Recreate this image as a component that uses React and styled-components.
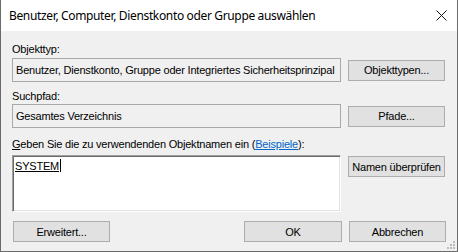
import React from 'react';
import styled, { createGlobalStyle } from 'styled-components';

const GlobalStyle = createGlobalStyle`
  html, body {
    margin: 0;
    padding: 0;
    background: #f0f0f0;
  }
`;

const Window = styled.div`
  position: relative;
  box-sizing: border-box;
  width: 458px;
  height: 252px;
  border: 1px solid #6b6b6b;
  border-top: 0;
  background: #f0f0f0;
  display: flex;
  flex-direction: column;
  font-family: "Liberation Sans", Arial, sans-serif;
  font-size: 11px;
  letter-spacing: -0.2px;
  color: #000;
`;

const TitleBar = styled.div`
  height: 31px;
  flex: none;
  background: #fff;
  display: flex;
  align-items: center;
  justify-content: space-between;
  padding: 0 10px 0 8px;
`;

const Title = styled.div`
  font-family: "Noto Sans", "Open Sans", sans-serif;
  font-size: 12px;
  letter-spacing: -0.35px;
  color: #000;
  padding-bottom: 1px;
`;

const CloseIcon = () => (
  <svg width="11" height="11" viewBox="0 0 11 11">
    <path d="M0.5 0.5 L10.5 10.5 M10.5 0.5 L0.5 10.5" stroke="#111" strokeWidth="1" fill="none" />
  </svg>
);

const Body = styled.div`
  flex: 1;
  padding: 12px 11px 0 11px;
  display: flex;
  flex-direction: column;
`;

const Label = styled.div`
  line-height: 13px;
  height: 13px;
  white-space: nowrap;
  margin-top: ${({ top }) => top || 0}px;
  margin-bottom: ${({ bottom }) => bottom || 0}px;
`;

const Accel = styled.span`
  text-decoration: underline;
`;

const Link = styled.a`
  color: #0066cc;
  text-decoration: underline;
  cursor: pointer;
`;

const Row = styled.div`
  display: flex;
  align-items: ${({ top }) => (top ? 'flex-start' : 'center')};
  gap: 7px;
`;

const ReadOnlyField = styled.div`
  box-sizing: border-box;
  width: 329px;
  height: 24px;
  border: 1px solid #a8a8a8;
  background: #f0f0f0;
  padding: 0 3px;
  display: flex;
  align-items: center;
  white-space: nowrap;
  overflow: hidden;
`;

const NamesBox = styled.div`
  box-sizing: border-box;
  width: 329px;
  height: 57px;
  background: #fff;
  border-style: solid;
  border-width: 1px;
  border-color: #a0a0a0 #ffffff #ffffff #a0a0a0;
  box-shadow: inset 1px 1px 0 #696969, inset -1px -1px 0 #e3e3e3;
  padding: 3px 2px;
  line-height: 13px;
`;

const ResolvedName = styled.span`
  text-decoration: underline;
`;

const Caret = styled.span`
  display: inline-block;
  width: 1px;
  height: 13px;
  background: #000;
  vertical-align: -2px;
  margin-left: 1px;
`;

const Button = styled.button`
  box-sizing: border-box;
  width: ${({ wide }) => (wide ? 98 : 97)}px;
  height: 21px;
  margin-top: ${({ offset }) => offset || 0}px;
  padding: 0;
  background: #e1e1e1;
  border: 1px solid #adadad;
  border-radius: 0;
  font-family: "Liberation Sans", Arial, sans-serif;
  font-size: 11px;
  letter-spacing: -0.2px;
  color: #000;
  white-space: nowrap;
`;

const Footer = styled.div`
  display: flex;
  gap: 7px;
  margin-top: 9px;
  padding-left: 1px;
`;

const Spacer = styled.div`
  flex: 1;
`;

const SizeGrip = styled.svg`
  position: absolute;
  right: 1px;
  bottom: 1px;
`;

const App = () => (
  <>
    <GlobalStyle />
    <Window>
      <TitleBar>
        <Title>Benutzer, Computer, Dienstkonto oder Gruppe auswählen</Title>
        <CloseIcon />
      </TitleBar>
      <Body>
        <Label bottom={2}>Objekttyp:</Label>
        <Row>
          <ReadOnlyField>Benutzer, Dienstkonto, Gruppe oder Integriertes Sicherheitsprinzipal</ReadOnlyField>
          <Button>Objekttypen...</Button>
        </Row>

        <Label top={8} bottom={1}>Suchpfad:</Label>
        <Row>
          <ReadOnlyField>Gesamtes Verzeichnis</ReadOnlyField>
          <Button>Pfade...</Button>
        </Row>

        <Label top={10} bottom={4}>
          <Accel>G</Accel>eben Sie die zu verwendenden Objektnamen ein (<Link>Beispiele</Link>):
        </Label>
        <Row top>
          <NamesBox>
            <ResolvedName>SYSTEM</ResolvedName>
            <Caret />
          </NamesBox>
          <Button offset={1}>Namen überprüfen</Button>
        </Row>

        <Footer>
          <Button>Erweitert...</Button>
          <Spacer />
          <Button wide>OK</Button>
          <Button>Abbrechen</Button>
        </Footer>
      </Body>
      <SizeGrip width="11" height="11" viewBox="0 0 11 11">
        <g fill="#bcbcbc">
          <rect x="8" y="2" width="2" height="2" />
          <rect x="5" y="5" width="2" height="2" />
          <rect x="8" y="5" width="2" height="2" />
          <rect x="2" y="8" width="2" height="2" />
          <rect x="5" y="8" width="2" height="2" />
          <rect x="8" y="8" width="2" height="2" />
        </g>
      </SizeGrip>
    </Window>
  </>
);

export default App;
